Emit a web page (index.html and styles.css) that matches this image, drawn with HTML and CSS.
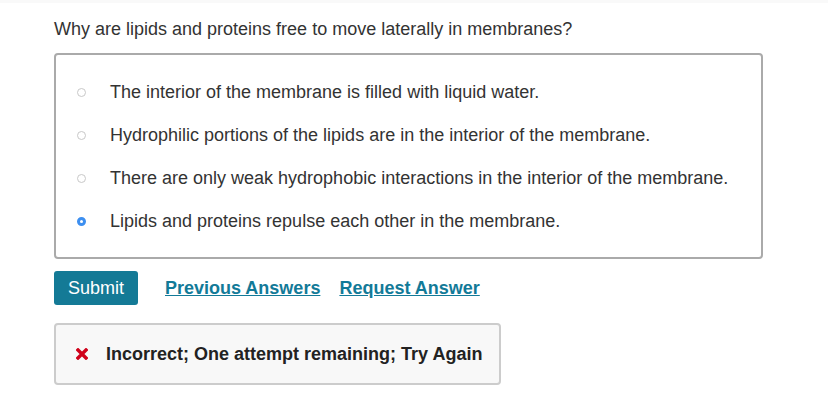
FILE: index.html
```html
<!DOCTYPE html>
<html lang="en">
<head>
    <meta charset="UTF-8">
    <title>Question</title>
    <link rel="stylesheet" href="styles.css">
</head>
<body>
    <div class="top-band"></div>
    <div class="question">
        <p class="prompt">Why are lipids and proteins free to move laterally in membranes?</p>

        <div class="options">
            <label class="option"><span class="radio"></span>The interior of the membrane is filled with liquid water.</label>
            <label class="option"><span class="radio"></span>Hydrophilic portions of the lipids are in the interior of the membrane.</label>
            <label class="option"><span class="radio"></span>There are only weak hydrophobic interactions in the interior of the membrane.</label>
            <label class="option"><span class="radio checked"></span>Lipids and proteins repulse each other in the membrane.</label>
        </div>

        <div class="actions">
            <button class="submit">Submit</button>
            <a href="#" class="link">Previous Answers</a>
            <a href="#" class="link">Request Answer</a>
        </div>

        <div class="feedback">
            <svg class="cross" width="12" height="12" viewBox="0 0 12 12">
                <path d="M2 2 L10 10 M10 2 L2 10" stroke="#d0021b" stroke-width="3.4" stroke-linecap="square"/>
            </svg>
            <span>Incorrect; One attempt remaining; Try Again</span>
        </div>
    </div>
</body>
</html>
```

FILE: styles.css
```css
body {
    margin: 0;
    background: #fff;
    font-family: "Liberation Sans", Arial, sans-serif;
    color: #333;
}
.top-band {
    height: 3px;
    background: #f9f9f9;
}
.question {
    padding: 0 54px;
}
.prompt {
    margin: 0;
    padding-top: 15px;
    font-size: 18px;
    line-height: 22px;
    height: 35px;
}
.options {
    width: 705px;
    border: 2px solid #aaa;
    border-radius: 4px;
    padding: 16px 0 14px;
}
.option {
    display: flex;
    align-items: center;
    height: 43px;
    font-size: 18px;
}
.radio {
    width: 7px;
    height: 7px;
    border: 1px solid #c8c8c8;
    border-radius: 50%;
    margin: 0 24px 0 21px;
    box-sizing: content-box;
}
.radio.checked {
    width: 3px;
    height: 3px;
    border: 3px solid #3d8ff0;
    background: #fff;
}
.actions {
    display: flex;
    align-items: center;
    margin-top: 12px;
    gap: 19px;
}
.submit {
    width: 84px;
    height: 34px;
    background: #147a96;
    color: #fff;
    border: none;
    border-radius: 3px;
    font-family: inherit;
    font-size: 18px;
    margin-right: 8px;
    padding: 0;
}
.link {
    color: #127a98;
    font-weight: bold;
    font-size: 18px;
    text-decoration: underline;
}
.feedback {
    display: flex;
    align-items: center;
    margin-top: 18px;
    width: 447px;
    height: 62px;
    background: #f8f8f8;
    border: 2px solid #ccc;
    border-radius: 4px;
    font-size: 18px;
    font-weight: bold;
    color: #222;
    box-sizing: border-box;
}
.cross {
    margin: 0 18px 0 20px;
}
```
